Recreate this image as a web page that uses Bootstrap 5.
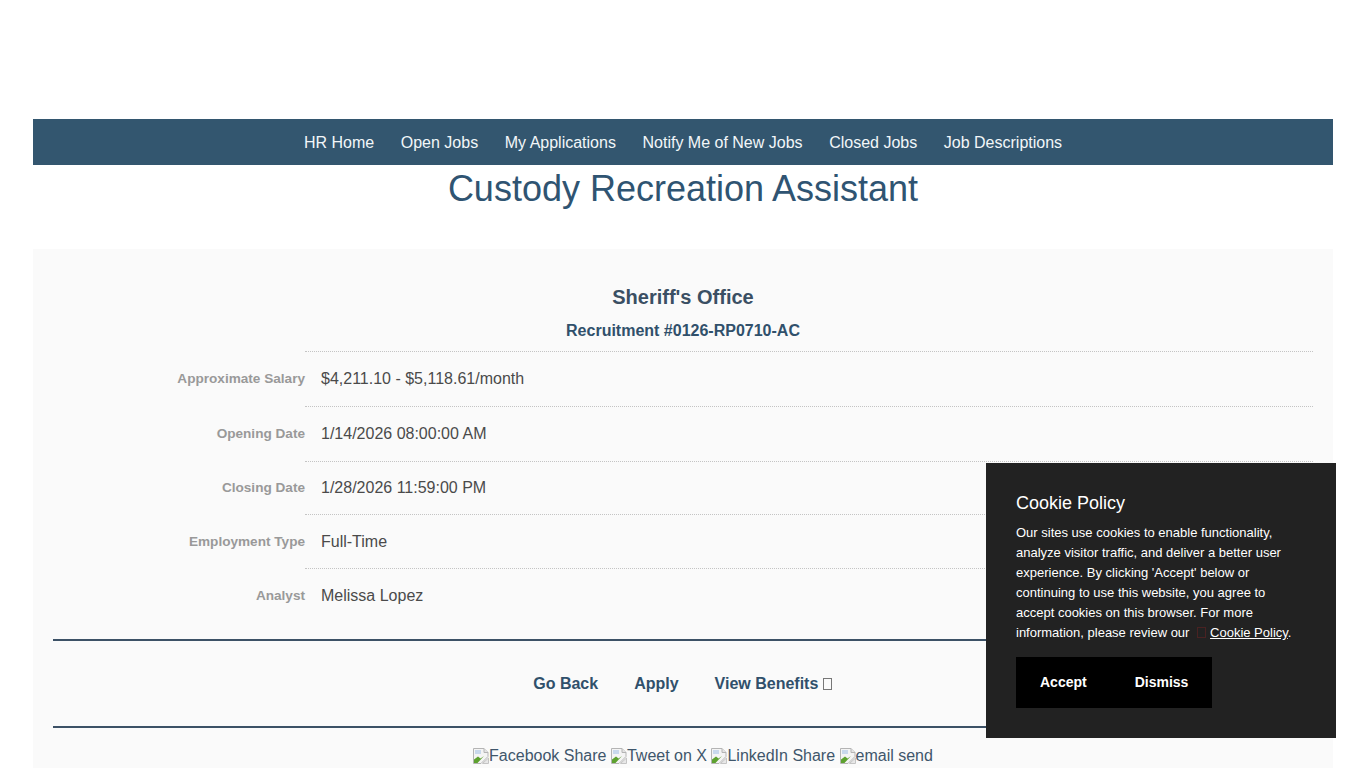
<!DOCTYPE html>
<html lang="en">
<head>
  <meta charset="UTF-8" />
  <meta name="viewport" content="width=device-width, initial-scale=1" />
  <title>Custody Recreation Assistant</title>
  <link href="https://cdn.jsdelivr.net/npm/bootstrap@5.3.3/dist/css/bootstrap.min.css" rel="stylesheet" />
  <style>
    html, body {
      height: 768px;
      overflow: hidden;
    }
    body {
      font-family: "Liberation Sans", Arial, sans-serif;
      color: #4a4a4a;
      background: #fff;
    }
    .page-wrap {
      width: 1300px;
      margin-left: 33px;
      padding-top: 119px;
    }
    .main-nav {
      height: 46px;
      padding-top: 1px;
      background-color: #33566f;
    }
    .main-nav a {
      color: #f2f6f9;
      font-size: 16px;
      text-decoration: none;
      padding: 0 13.3px;
    }
    .job-title {
      color: #2f5472;
      font-size: 36px;
      line-height: 47px;
      font-weight: 400;
      margin: 0 0 37px;
    }
    .job-panel {
      background-color: #fafafa;
      padding: 36px 20px 0;
      height: 520px;
    }
    .dept-name {
      color: #3a4f63;
      font-size: 20px;
      line-height: 24px;
      font-weight: 700;
      margin: 0 0 10px;
    }
    .recruit-no {
      color: #30506b;
      font-size: 16px;
      line-height: 24px;
      font-weight: 700;
      margin: 0 0 8px;
    }
    .info-label {
      width: 252px;
      flex: none;
      text-align: right;
      color: #999;
      font-size: 13.6px;
      font-weight: 700;
      padding-top: 1px;
    }
    .info-value {
      flex: 1;
      font-size: 16px;
      padding-left: 16px;
      color: #4a4a4a;
    }
    .info-row {
      height: 54px;
      line-height: 54px;
    }
    .info-row.tall-row {
      height: 55px;
    }
    .info-row.short-row {
      height: 53px;
      line-height: 52px;
    }
    .info-row .info-value {
      border-top: 1px dotted #c4c4c4;
    }
    .panel-rule {
      border-top: 2px solid #3c5166;
      opacity: 1;
      margin: 0;
    }
    .action-row {
      height: 85px;
      gap: 36px;
    }
    .action-row a {
      color: #30506b;
      font-size: 16px;
      font-weight: 700;
      text-decoration: none;
    }
    .tofu {
      display: inline-block;
      width: 9px;
      height: 12px;
      margin-right: 1px;
      border: 1px solid #777;
      vertical-align: -1px;
    }
    .share-row {
      color: #3f566b;
      font-size: 16px;
      line-height: 24px;
      padding: 16px 0 0 40px;
    }
    .share-row a {
      color: inherit;
      text-decoration: none;
    }
    .broken-img {
      width: 16px;
      height: 16px;
      vertical-align: -3px;
    }
    .cookie-box {
      position: fixed;
      right: 30px;
      bottom: 30px;
      width: 350px;
      height: 275px;
      padding: 30px;
      background-color: #222;
      color: #fff;
    }
    .cookie-title {
      font-size: 18px;
      line-height: 20px;
      font-weight: 400;
      margin: 0 0 10px;
    }
    .cookie-text {
      font-size: 13px;
      line-height: 20px;
      margin: 0 0 14px;
    }
    .cookie-text a {
      color: #fff;
    }
    .cookie-text .tofu {
      width: 9px;
      height: 11px;
      border-color: #4a2222;
      margin: 0 4px 0 4px;
    }
    .cookie-btn {
      background: #000;
      color: #fff;
      border: 0;
      border-radius: 0;
      font-size: 14px;
      font-weight: 700;
      height: 51px;
      padding: 0 24px;
    }
    .cookie-btn:hover {
      background: #000;
      color: #fff;
    }
  </style>
</head>
<body>
  <svg class="d-none">
    <symbol id="broken-pic" viewBox="0 0 16 16">
      <path d="M.5.5h10.5l4 4v4l-7 7h-7.500z" fill="#f4f4f4" stroke="#b4b4b4"/>
      <path d="M11 .5v4h4" fill="#e4e4e4" stroke="#b4b4b4"/>
      <path d="M2 2h6v4H2z" fill="#c8d8ec"/>
      <path d="M1 15v-3.500l4-3 2.500 2 3.500-2.500-6.500 7z" fill="#5da12f"/>
      <path d="M15.500 10v5.500h-6z" fill="#e8e8e8" stroke="#c4c4c4"/>
    </symbol>
  </svg>

  <div class="page-wrap">
    <nav class="main-nav d-flex justify-content-center align-items-center">
      <a href="#">HR Home</a>
      <a href="#">Open Jobs</a>
      <a href="#">My Applications</a>
      <a href="#">Notify Me of New Jobs</a>
      <a href="#">Closed Jobs</a>
      <a href="#">Job Descriptions</a>
    </nav>

    <h1 class="job-title text-center">Custody Recreation Assistant</h1>

    <div class="job-panel">
      <h2 class="dept-name text-center">Sheriff's Office</h2>
      <h3 class="recruit-no text-center">Recruitment #0126-RP0710-AC</h3>

      <div class="info-row tall-row d-flex">
        <div class="info-label">Approximate Salary</div>
        <div class="info-value">$4,211.10 - $5,118.61/month</div>
      </div>
      <div class="info-row tall-row d-flex">
        <div class="info-label">Opening Date</div>
        <div class="info-value">1/14/2026 08:00:00 AM</div>
      </div>
      <div class="info-row short-row d-flex">
        <div class="info-label">Closing Date</div>
        <div class="info-value">1/28/2026 11:59:00 PM</div>
      </div>
      <div class="info-row d-flex">
        <div class="info-label">Employment Type</div>
        <div class="info-value">Full-Time</div>
      </div>
      <div class="info-row tall-row d-flex">
        <div class="info-label">Analyst</div>
        <div class="info-value">Melissa Lopez</div>
      </div>

      <hr class="panel-rule mt-3" />
      <div class="action-row d-flex justify-content-center align-items-center">
        <a href="#">Go Back</a>
        <a href="#">Apply</a>
        <a href="#">View Benefits <span class="tofu"></span></a>
      </div>
      <hr class="panel-rule" />

      <div class="share-row text-center">
        <a href="#"><svg class="broken-img"><use href="#broken-pic"/></svg>Facebook Share</a>
        <a href="#"><svg class="broken-img"><use href="#broken-pic"/></svg>Tweet on X</a>
        <a href="#"><svg class="broken-img"><use href="#broken-pic"/></svg>LinkedIn Share</a>
        <a href="#"><svg class="broken-img"><use href="#broken-pic"/></svg>email send</a>
      </div>
    </div>
  </div>

  <div class="cookie-box">
    <h4 class="cookie-title">Cookie Policy</h4>
    <p class="cookie-text">Our sites use cookies to enable functionality, analyze visitor traffic, and deliver a better user experience. By clicking 'Accept' below or continuing to use this website, you agree to accept cookies on this browser. For more information, please review our <span class="tofu"></span><a href="#">Cookie Policy</a>.</p>
    <div class="d-flex">
      <button type="button" class="btn cookie-btn">Accept</button>
      <button type="button" class="btn cookie-btn">Dismiss</button>
    </div>
  </div>

  <script src="https://cdn.jsdelivr.net/npm/bootstrap@5.3.3/dist/js/bootstrap.bundle.min.js"></script>
</body>
</html>
